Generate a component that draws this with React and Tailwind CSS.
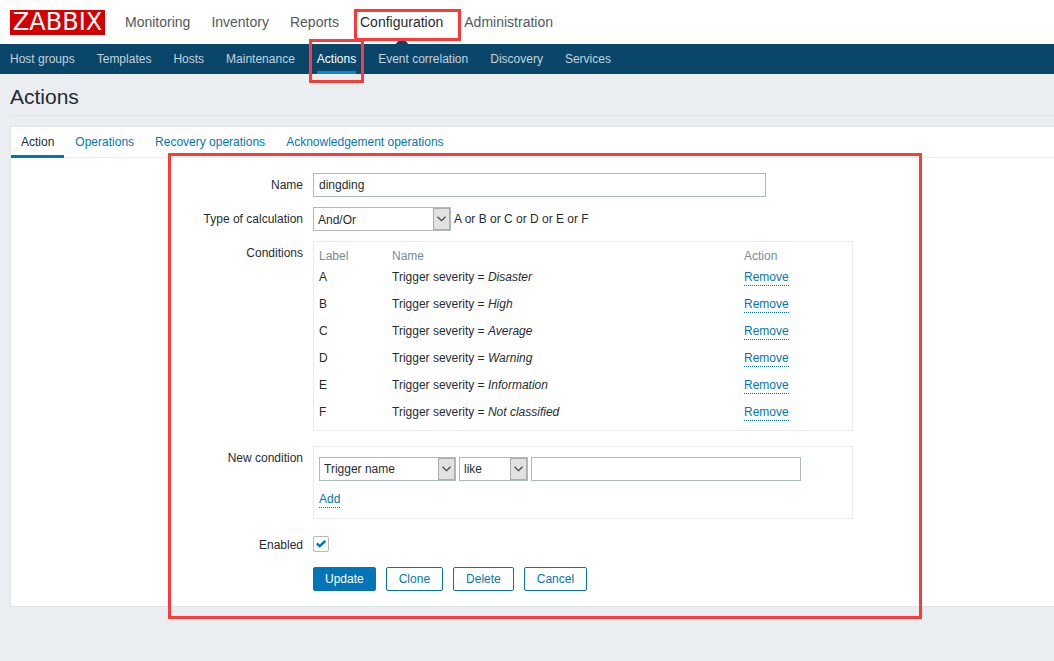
import { useState } from 'react'

const MAIN_MENU = ['Monitoring', 'Inventory', 'Reports', 'Configuration', 'Administration']

const SUB_MENU = [
  'Host groups', 'Templates', 'Hosts', 'Maintenance', 'Actions',
  'Event correlation', 'Discovery', 'Services',
]

const TABS = ['Action', 'Operations', 'Recovery operations', 'Acknowledgement operations']

const CONDITIONS = [
  { label: 'A', severity: 'Disaster' },
  { label: 'B', severity: 'High' },
  { label: 'C', severity: 'Average' },
  { label: 'D', severity: 'Warning' },
  { label: 'E', severity: 'Information' },
  { label: 'F', severity: 'Not classified' },
]

// Red frame drawn around the parts the reader should look at
function Highlight({ className }) {
  return <div className={`pointer-events-none absolute z-10 border-3 border-[#ff3838] ${className}`} />
}

function Header() {
  return (
    <header>
      <div className="flex h-11 items-center bg-white pl-[10px]">
        <a
          href="#"
          aria-label="Zabbix"
          className="flex h-[25px] w-[95px] items-center justify-center bg-[#d40000] font-['DejaVu_Sans',sans-serif] text-2xl leading-[25px] text-white"
        >
          ZABBIX
        </a>
        <nav className="ml-5 flex gap-[21px] text-sm">
          {MAIN_MENU.map(item => (
            <div key={item} className="relative">
              <a href="#" className={item === 'Configuration' ? 'text-[#1f2c33]' : 'text-[#4f5a60]'}>
                {item}
              </a>
              {item === 'Configuration' && (
                <>
                  <svg className="absolute top-[26px] left-1/2 -ml-2" width="16" height="8" viewBox="0 0 16 8">
                    <path d="M0 8 L6 1 Q8 -1 10 1 L16 8 Z" fill="#0a466a" />
                  </svg>
                  <Highlight className="-top-[3px] -right-[18px] -left-[6px] h-8" />
                </>
              )}
            </div>
          ))}
        </nav>
      </div>

      <nav className="flex h-[30px] gap-[22px] bg-[#0a466a] pl-[10px] leading-[30px]">
        {SUB_MENU.map(item => (
          <div key={item} className="relative">
            <a
              href="#"
              className={
                item === 'Actions'
                  ? 'block h-[30px] border-b-3 border-[#1284c9] text-white'
                  : 'block text-[#c3d3dc]'
              }
            >
              {item}
            </a>
            {item === 'Actions' && <Highlight className="-top-[5px] -right-2 -left-2 h-11" />}
          </div>
        ))}
      </nav>
    </header>
  )
}

function Select({ id, label, value, className }) {
  return (
    <div className={`relative h-6 ${className}`}>
      <select
        id={id}
        aria-label={label}
        defaultValue={value}
        className="h-6 w-full appearance-none border border-[#acbbc2] bg-white pl-1"
      >
        <option>{value}</option>
      </select>
      <span className="pointer-events-none absolute top-px right-px bottom-px flex w-[17px] items-center justify-center border border-[#a9adb0] bg-[#e1e1e1]">
        <svg width="9" height="6" viewBox="0 0 9 6" fill="none" stroke="#484848" strokeWidth="1.3">
          <path d="M0.5 0.7 L4.5 4.7 L8.5 0.7" />
        </svg>
      </span>
    </div>
  )
}

function Row({ label, htmlFor, children }) {
  return (
    <div className="flex gap-[10px]">
      <div className="w-[292px] shrink-0 text-right leading-6">
        {htmlFor ? <label htmlFor={htmlFor}>{label}</label> : label}
      </div>
      {children}
    </div>
  )
}

function LinkButton({ children }) {
  return (
    <button type="button" className="block border-b border-dotted border-[#0275b8] leading-4 text-[#0275b8]">
      {children}
    </button>
  )
}

function ConditionsTable() {
  return (
    <div className="mb-[5px] w-[540px] border border-[#e8ecef] px-[5px] pt-1.5 pb-1">
      <table className="w-full table-fixed text-left">
        <thead>
          <tr className="h-4 leading-4 text-[#768d99]">
            <th className="w-[73px] font-normal">Label</th>
            <th className="w-[352px] font-normal">Name</th>
            <th className="font-normal">Action</th>
          </tr>
        </thead>
        <tbody>
          {CONDITIONS.map(c => (
            <tr key={c.label} className="h-[27px]">
              <td className="pb-0.5">{c.label}</td>
              <td className="pb-0.5">Trigger severity = <em>{c.severity}</em></td>
              <td><LinkButton>Remove</LinkButton></td>
            </tr>
          ))}
        </tbody>
      </table>
    </div>
  )
}

function ActionForm() {
  const [name, setName] = useState('dingding')
  const [value, setValue] = useState('')
  const [enabled, setEnabled] = useState(true)
  const secondary = 'h-6 rounded-xs border border-[#0275b8] bg-white px-3 text-[#0275b8]'

  return (
    <form className="flex flex-col gap-[10px] py-[15px]" onSubmit={e => e.preventDefault()}>
      <Row label="Name" htmlFor="name">
        <input
          id="name"
          value={name}
          onChange={e => setName(e.target.value)}
          className="h-6 w-[453px] border border-[#acbbc2] px-[5px]"
        />
      </Row>

      <Row label="Type of calculation" htmlFor="evaltype">
        <div className="flex gap-[3px] leading-6">
          <Select id="evaltype" value="And/Or" className="w-[138px]" />
          <span>A or B or C or D or E or F</span>
        </div>
      </Row>

      <Row label="Conditions">
        <ConditionsTable />
      </Row>

      <Row label="New condition" htmlFor="condition-type">
        <div className="mb-1 w-[540px] border border-[#e8ecef] px-[5px] py-[10px]">
          <div className="mb-[10px] flex gap-[3px]">
            <Select id="condition-type" value="Trigger name" className="w-[137px]" />
            <Select label="Operator" value="like" className="w-[69px]" />
            <input
              aria-label="Value"
              value={value}
              onChange={e => setValue(e.target.value)}
              className="h-6 w-[270px] border border-[#acbbc2] px-[5px]"
            />
          </div>
          <LinkButton>Add</LinkButton>
        </div>
      </Row>

      <Row label="Enabled" htmlFor="enabled">
        <div className="relative flex h-[22px] items-center">
          <input
            id="enabled"
            type="checkbox"
            checked={enabled}
            onChange={e => setEnabled(e.target.checked)}
            className="size-4 appearance-none rounded-xs border border-[#acbbc2] bg-white"
          />
          {enabled && (
            <svg
              className="pointer-events-none absolute left-[3px]"
              width="10" height="8" viewBox="0 0 10 8" fill="none" stroke="#0275b8" strokeWidth="2.4"
            >
              <path d="M0.8 3.4 L3.8 6.2 L9.3 0.9" />
            </svg>
          )}
        </div>
      </Row>

      <Row label="">
        <div className="flex gap-[10px]">
          <button type="submit" className="h-6 rounded-xs border border-[#0275b8] bg-[#0275b8] px-[11px] text-white">
            Update
          </button>
          <button type="button" className={secondary}>Clone</button>
          <button type="button" className={secondary}>Delete</button>
          <button type="button" className={secondary}>Cancel</button>
        </div>
      </Row>
    </form>
  )
}

export default function App() {
  return (
    <div className="min-h-screen bg-[#ebeef0] font-['Liberation_Sans',Arial,sans-serif] text-xs text-[#1f2c33]">
      <Header />
      <main className="pl-[10px]">
        <h1 className="mb-[10px] border-b border-[#dfe4e7] pt-[9px] pb-1 text-[21px] leading-7">Actions</h1>

        <div className="relative border-y border-l border-[#dfe4e7] bg-white">
          <div className="flex gap-px border-b border-[#ebeef0]">
            {TABS.map((tab, i) => (
              <a
                key={tab}
                href="#"
                className={
                  i === 0
                    ? '-mb-px border-b-3 border-[#0275b8] px-[10px] pt-0.5 leading-[26px]'
                    : 'px-[10px] pt-0.5 leading-[26px] text-[#0275b8]'
                }
              >
                {tab}
              </a>
            ))}
          </div>
          <ActionForm />
          <Highlight className="top-[26px] -bottom-[13px] left-[157px] w-[754px]" />
        </div>
      </main>
    </div>
  )
}
